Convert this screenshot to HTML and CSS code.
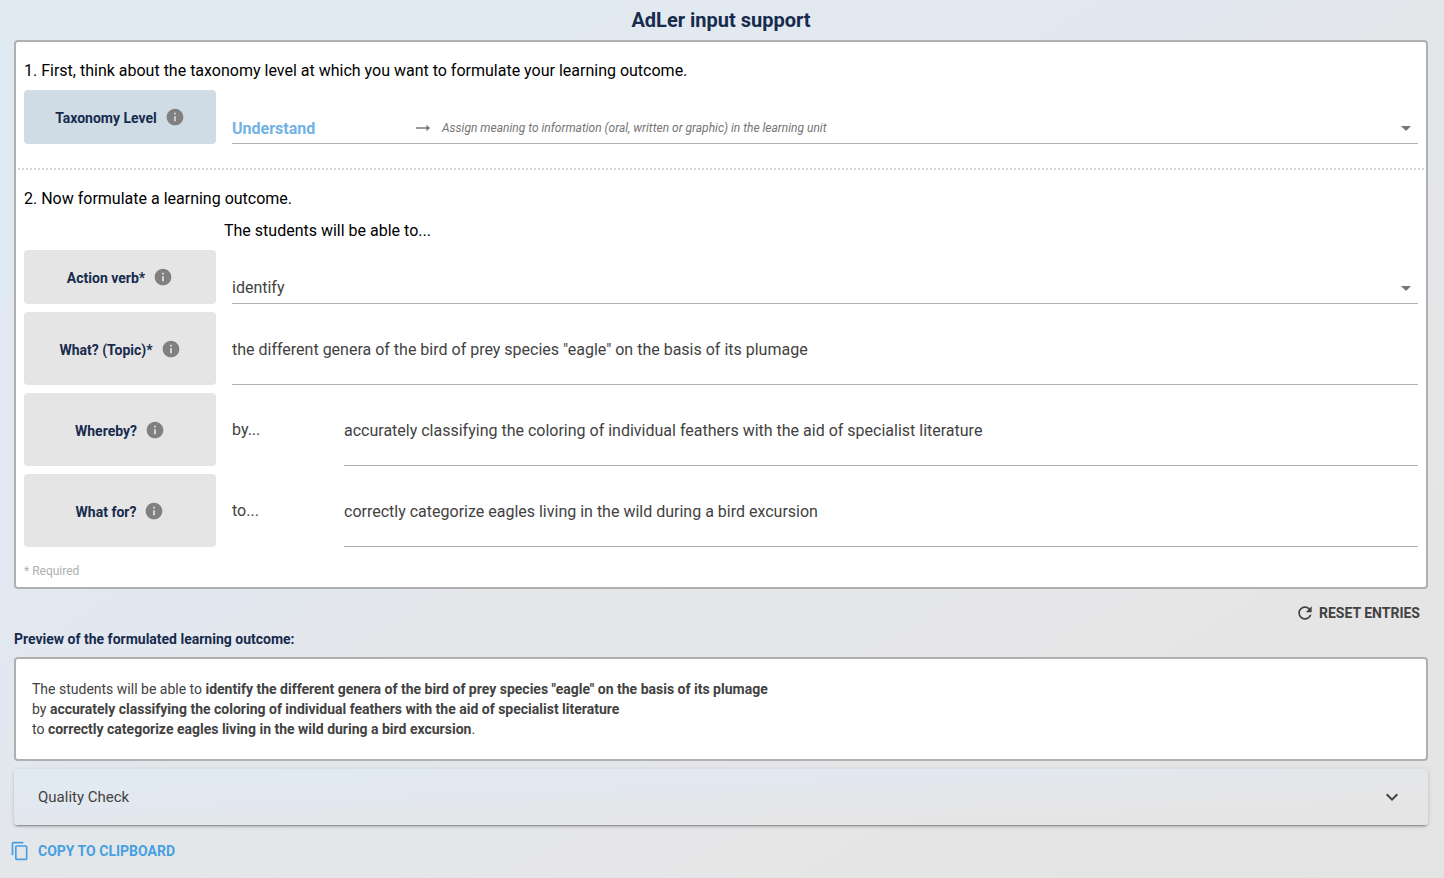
FILE: index.html
```html
<!DOCTYPE html>
<html lang="en">
<head>
<meta charset="utf-8">
<title>AdLer input support</title>
<link rel="stylesheet" href="styles.css">
</head>
<body>
<svg width="0" height="0" class="sprite" aria-hidden="true">
  <symbol id="info" viewBox="0 0 24 24"><path d="M12 2C6.480 2 2 6.480 2 12s4.480 10 10 10 10-4.480 10-10S17.520 2 12 2zm1 15h-2v-6h2v6zm0-8h-2V7h2v2z"/></symbol>
  <symbol id="drop" viewBox="0 0 24 24"><path d="M7 10l5 5 5-5z"/></symbol>
</svg>
<main class="page">
  <h1 class="title">AdLer input support</h1>
  <form class="panel">
    <section class="step">
      <p class="hint">1. First, think about the taxonomy level at which you want to formulate your learning outcome.</p>
      <div class="row">
        <label class="tag tag-level" for="level">Taxonomy Level <svg class="icon info"><use href="#info"/></svg></label>
        <div class="picker">
          <select class="choice level" id="level"><option>Understand</option></select>
          <span class="meaning">
            <svg class="arrow" viewBox="0 0 14 8"><path d="M0 3.200h10.500V.8L14 4l-3.500 3.200V4.800H0z"/></svg>
            Assign meaning to information (oral, written or graphic) in the learning unit
          </span>
          <svg class="caret"><use href="#drop"/></svg>
        </div>
      </div>
    </section>
    <section class="step">
      <p class="hint">2. Now formulate a learning outcome.</p>
      <p class="hint lead">The students will be able to...</p>
      <div class="row">
        <label class="tag" for="verb">Action verb* <svg class="icon info"><use href="#info"/></svg></label>
        <div class="picker">
          <select class="choice" id="verb"><option>identify</option></select>
          <svg class="caret"><use href="#drop"/></svg>
        </div>
      </div>
      <div class="row row-tall">
        <label class="tag" for="topic">What? (Topic)* <svg class="icon info"><use href="#info"/></svg></label>
        <input class="field" id="topic" type="text" value="the different genera of the bird of prey species &quot;eagle&quot; on the basis of its plumage">
      </div>
      <div class="row row-tall">
        <label class="tag" for="whereby">Whereby? <svg class="icon info"><use href="#info"/></svg></label>
        <span class="joiner">by...</span>
        <input class="field" id="whereby" type="text" value="accurately classifying the coloring of individual feathers with the aid of specialist literature">
      </div>
      <div class="row row-tall">
        <label class="tag" for="purpose">What for? <svg class="icon info"><use href="#info"/></svg></label>
        <span class="joiner">to...</span>
        <input class="field" id="purpose" type="text" value="correctly categorize eagles living in the wild during a bird excursion">
      </div>
    </section>
    <p class="required">* Required</p>
  </form>
  <button class="action reset" type="button">
    <svg class="icon" viewBox="0 0 24 24"><path d="M17.650 6.350C16.200 4.900 14.210 4 12 4c-4.420 0-7.990 3.580-7.990 8s3.570 8 7.990 8c3.730 0 6.840-2.550 7.730-6h-2.080c-.82 2.330-3.040 4-5.650 4-3.310 0-6-2.690-6-6s2.690-6 6-6c1.660 0 3.140.69 4.220 1.780L13 11h7V4l-2.350 2.350z"/></svg>
    RESET ENTRIES
  </button>
  <h2 class="subtitle">Preview of the formulated learning outcome:</h2>
  <section class="panel preview">
    <p>The students will be able to <strong>identify the different genera of the bird of prey species "eagle" on the basis of its plumage</strong></p>
    <p>by <strong>accurately classifying the coloring of individual feathers with the aid of specialist literature</strong></p>
    <p>to <strong>correctly categorize eagles living in the wild during a bird excursion</strong>.</p>
  </section>
  <button class="quality" type="button" aria-expanded="false">
    Quality Check
    <svg class="chevron" viewBox="0 0 24 24"><path d="M7.410 8.590L12 13.170l4.590-4.580L18 10l-6 6-6-6z"/></svg>
  </button>
  <button class="action copy" type="button">
    <svg class="icon" viewBox="0 0 24 24"><path d="M16 1H4c-1.100 0-2 .9-2 2v14h2V3h12V1zm3 4H8c-1.100 0-2 .9-2 2v14c0 1.100.9 2 2 2h11c1.100 0 2-.9 2-2V7c0-1.100-.9-2-2-2zm0 16H8V7h11v14z"/></svg>
    COPY TO CLIPBOARD
  </button>
</main>
</body>
</html>
```
FILE: styles.css
```css
:root {
  --backdrop: linear-gradient(to bottom right, #e0eaf2 0%, #e3e8f0 42%, #e3e7ea 50%, #e6e6e8 72%, #e5e5e5 85%, #e4e4e4 100%);
  --line: #b0b0b0;
  --navy: #172b4d;
  --text: #424242;
}

* { box-sizing: border-box; }

body {
  margin: 0;
  min-height: 100vh;
  background: var(--backdrop);
  color: var(--text);
  font: 16px/24px Roboto, "Liberation Sans", sans-serif;
}

h1, h2, p { margin: 0; }

button, input, select {
  margin: 0;
  border: 0;
  background: none;
  color: inherit;
  font: inherit;
}

svg { fill: currentColor; flex: none; }
.sprite { position: absolute; }
.icon { width: 20px; height: 20px; }

.page {
  display: flex;
  flex-direction: column;
  gap: 8px;
  padding: 8px 16px 8px 14px;
}

.title {
  color: var(--navy);
  font-size: 20px;
  font-weight: 700;
  line-height: 24px;
  text-align: center;
}

.panel {
  border: 2px solid var(--line);
  border-radius: 4px;
  background: #fff;
}

.step {
  display: flex;
  flex-direction: column;
  gap: 8px;
  margin: 0 2px;
  padding: 16px 6px;
}

.step:first-child { padding-bottom: 24px; }
.step + .step { border-top: 2px dotted #d6d6d6; }

.hint {
  padding-top: 2px;
  color: #000;
  line-height: 22px;
}

.lead { padding-left: 200px; }

.row {
  display: flex;
  gap: 16px;
  min-height: 54px;
}

.row-tall { min-height: 73px; }
.row-tall .joiner { width: 96px; align-self: center; }

.tag {
  display: flex;
  flex: none;
  align-items: center;
  justify-content: center;
  gap: 8px;
  width: 192px;
  padding-top: 2px;
  border-radius: 4px;
  background: #e5e5e5;
  color: var(--navy);
  font-size: 14px;
  font-weight: 700;
}

.tag-level { background: #cfdce6; }

.info {
  margin-bottom: 2px;
  color: #808080;
}

.picker {
  display: grid;
  flex: 1;
  grid-template-columns: 184px 1fr 24px;
  grid-template-rows: 32px;
  align-content: end;
  align-items: center;
}

.choice {
  grid-area: 1 / 1 / 2 / 4;
  align-self: stretch;
  padding: 0;
  border-bottom: 1px solid var(--line);
  border-radius: 0;
  appearance: none;
}

.level {
  padding-top: 2px;
  color: #72b2e4;
  font-weight: 700;
}

.meaning {
  display: flex;
  grid-area: 1 / 2;
  align-items: center;
  gap: 12px;
  color: #757575;
  font-size: 12px;
  font-style: italic;
  pointer-events: none;
}

.arrow { width: 14px; height: 8px; }

.caret {
  grid-area: 1 / 3;
  width: 24px;
  height: 24px;
  color: #757575;
  pointer-events: none;
}

.field {
  flex: 1;
  min-width: 0;
  padding: 4px 0 0;
  border-bottom: 1px solid var(--line);
}

.required {
  padding: 0 8px 8px;
  color: #b0b0b0;
  font-size: 12px;
  line-height: 16px;
}

.action {
  display: flex;
  align-items: center;
  padding: 0 8px;
  font-size: 14px;
  font-weight: 700;
}

.reset {
  align-self: flex-end;
  gap: 4px;
  height: 32px;
  margin-bottom: -8px;
}

.subtitle {
  color: var(--navy);
  font-size: 14px;
  font-weight: 700;
  line-height: 20px;
}

.preview {
  padding: 20px 16px;
  font-size: 14px;
  line-height: 20px;
}

.quality {
  display: flex;
  align-items: center;
  justify-content: space-between;
  height: 56px;
  padding: 0 24px;
  border-radius: 4px;
  background: var(--backdrop);
  box-shadow: 0 3px 1px -2px rgba(0, 0, 0, .2), 0 2px 2px rgba(0, 0, 0, .14), 0 1px 5px rgba(0, 0, 0, .12);
  font-size: 15px;
}

.chevron { width: 24px; height: 24px; }

.copy {
  align-self: flex-start;
  gap: 8px;
  height: 36px;
  margin-left: -12px;
  color: #489fe0;
}
```
